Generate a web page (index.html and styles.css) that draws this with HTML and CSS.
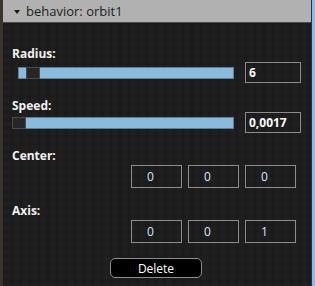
FILE: index.html
```html
<!DOCTYPE html>
<html lang="en">
<head>
    <meta charset="UTF-8">
    <title>behavior: orbit1</title>
    <link rel="stylesheet" href="styles.css">
</head>
<body>
    <div id="frame">
        <div id="panel">
            <div class="header">
                <span class="arrow"></span>
                <span class="title">behavior: orbit1</span>
            </div>
            <div class="content">
                <div class="label">Radius:</div>
                <div class="slider-row radius">
                    <div class="track"><div class="thumb"></div></div>
                    <input class="value" type="text" value="6">
                </div>

                <div class="label speed-label">Speed:</div>
                <div class="slider-row speed">
                    <div class="track"><div class="thumb"></div></div>
                    <input class="value" type="text" value="0,0017">
                </div>

                <div class="label center-label">Center:</div>
                <div class="vector-row">
                    <input class="coord" type="text" value="0">
                    <input class="coord" type="text" value="0">
                    <input class="coord" type="text" value="0">
                </div>

                <div class="label axis-label">Axis:</div>
                <div class="vector-row">
                    <input class="coord" type="text" value="0">
                    <input class="coord" type="text" value="0">
                    <input class="coord" type="text" value="1">
                </div>

                <div class="actions">
                    <button class="delete">Delete</button>
                </div>
            </div>
        </div>
        <div id="scrollbar"></div>
    </div>
</body>
</html>
```

FILE: styles.css
```css
body {
    margin: 0;
    padding: 0;
    font-family: "Open Sans", "DejaVu Sans", sans-serif;
    background-color: #1b1b1b;
}

#frame {
    display: flex;
    width: 315px;
    height: 286px;
    overflow: hidden;
}

#panel {
    width: 308px;
    height: 286px;
    border-left: 3px solid #3a342e;
    border-right: 1px solid #2e2e2e;
    background-color: #1b1b1b;
    background-image: radial-gradient(circle at 50% 50%, #1f1f1f 0, #1f1f1f 3px, transparent 4px);
    background-size: 9px 8px;
}

#scrollbar {
    width: 3px;
    background-color: #8ab8f0;
}

.header {
    display: flex;
    align-items: center;
    height: 22px;
    background-color: #b1b1b1;
    border-bottom: 1px solid #4a4a4a;
    padding-left: 11px;
}

.arrow {
    width: 0;
    height: 0;
    border-left: 3.5px solid transparent;
    border-right: 3.5px solid transparent;
    border-top: 4px solid #1a1a1a;
    margin-right: 6px;
    margin-top: 1px;
}

.title {
    font-size: 13px;
    color: #1e1e1e;
}

.content {
    padding: 23px 10px 0 9px;
}

.label {
    font-size: 12px;
    font-weight: bold;
    line-height: 16px;
    height: 16px;
    color: #f2f2f2;
}

.speed-label {
    margin-top: 15px;
    height: 14px;
}

.center-label {
    margin-top: 15px;
    margin-bottom: 1px;
}

.axis-label {
    margin-top: 15px;
    margin-bottom: 1px;
}

.slider-row {
    display: flex;
    align-items: center;
    height: 21px;
}

.track {
    display: flex;
    height: 10px;
    background-color: #88bbdd;
    border: 1px solid #5f7f95;
}

.radius .track {
    margin-left: 6px;
    width: 214px;
}

.speed .track {
    width: 220px;
}

.thumb {
    width: 12px;
    height: 10px;
    background-color: #262626;
    border: 1px solid #4a4a4a;
    margin-top: -1px;
}

.radius .thumb {
    margin-left: 7px;
}

.speed .thumb {
    margin-left: -1px;
}

.value {
    box-sizing: border-box;
    width: 56px;
    height: 21px;
    margin-left: 11px;
    padding: 0 3px;
    background: transparent;
    border: 1px solid #8c8c8c;
    color: #ffffff;
    font-family: "Open Sans", "DejaVu Sans", sans-serif;
    font-size: 12px;
    font-weight: bold;
    outline: none;
}

.vector-row {
    display: flex;
    justify-content: flex-end;
    gap: 6px;
    margin-right: 5px;
}

.coord {
    box-sizing: border-box;
    width: 51px;
    height: 23px;
    padding: 0 0 0 15px;
    background: transparent;
    border: 1px solid #8c8c8c;
    color: #dbe6ff;
    font-family: "Open Sans", "DejaVu Sans", sans-serif;
    font-size: 12px;
    outline: none;
}

.actions {
    display: flex;
    justify-content: center;
    margin-top: 15px;
    padding-right: 1px;
}

.delete {
    width: 92px;
    height: 20px;
    background-color: #000000;
    border: 1px solid #8c8c8c;
    border-radius: 5px;
    color: #ffffff;
    font-family: "Open Sans", "DejaVu Sans", sans-serif;
    font-size: 12px;
    padding: 0;
}
```
